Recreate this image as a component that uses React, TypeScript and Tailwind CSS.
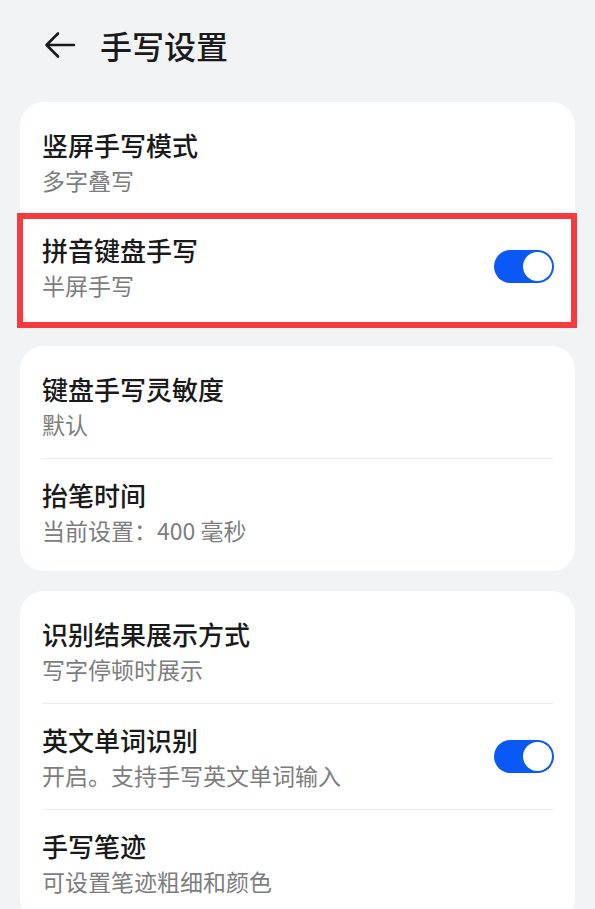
import React from "react";

type Item = { title: string; sub: string; toggle?: boolean; highlight?: boolean };

function Toggle() {
  return (
    <div className="relative flex h-[33px] w-[60px] shrink-0 items-center rounded-full bg-[#0a59f7]">
      <div className="absolute right-[2px] h-[29px] w-[29px] rounded-full bg-white" />
    </div>
  );
}

function Row({ item, divider }: { item: Item; divider: boolean }) {
  return (
    <div className="relative">
      {divider && <div className="mx-[22px] h-px bg-[#ececee]" />}
      <div className="flex h-[105px] items-center pl-[22px] pr-[21px]">
        <div className="flex flex-1 flex-col">
          <div className="text-[26px] font-medium leading-[32px] text-[#1a1a1a]">{item.title}</div>
          <div className="mt-[5px] text-[23px] leading-[28px] text-[#7d7d7d]">{item.sub}</div>
        </div>
        {item.toggle && <Toggle />}
      </div>
      {item.highlight && (
        <div className="pointer-events-none absolute -left-[3px] -right-[2px] -top-[1px] -bottom-[9px] border-[6px] border-[#f43b3f]" />
      )}
    </div>
  );
}

function Card({ items, dividers = true }: { items: Item[]; dividers?: boolean }) {
  return (
    <div className="rounded-[24px] bg-white py-[7px]">
      {items.map((it, i) => (
        <Row key={i} item={it} divider={dividers && i > 0} />
      ))}
    </div>
  );
}

export default function App() {
  return (
    <div
      className="min-h-[909px] w-full overflow-hidden bg-[#f1f3f5]"
      style={{ fontFamily: '"Noto Sans CJK SC", "Noto Sans", sans-serif' }}
    >
      <div className="flex h-[90px] items-center pl-[44px]">
        <svg width="32" height="28" viewBox="0 0 32 28" fill="none" className="mr-[24px]">
          <path d="M30 14H3M14 2.5L2.5 14L14 25.5" stroke="#1a1a1a" strokeWidth="2.6" strokeLinecap="round" strokeLinejoin="round" />
        </svg>
        <div className="text-[32px] font-medium leading-[40px] text-[#1a1a1a]">手写设置</div>
      </div>
      <div className="flex flex-col gap-[20px] px-[20px] pt-[12px]">
        <Card
          dividers={false}
          items={[
            { title: "竖屏手写模式", sub: "多字叠写" },
            { title: "拼音键盘手写", sub: "半屏手写", toggle: true, highlight: true },
          ]}
        />
        <Card
          items={[
            { title: "键盘手写灵敏度", sub: "默认" },
            { title: "抬笔时间", sub: "当前设置：400 毫秒" },
          ]}
        />
        <Card
          items={[
            { title: "识别结果展示方式", sub: "写字停顿时展示" },
            { title: "英文单词识别", sub: "开启。支持手写英文单词输入", toggle: true },
            { title: "手写笔迹", sub: "可设置笔迹粗细和颜色" },
          ]}
        />
      </div>
    </div>
  );
}
